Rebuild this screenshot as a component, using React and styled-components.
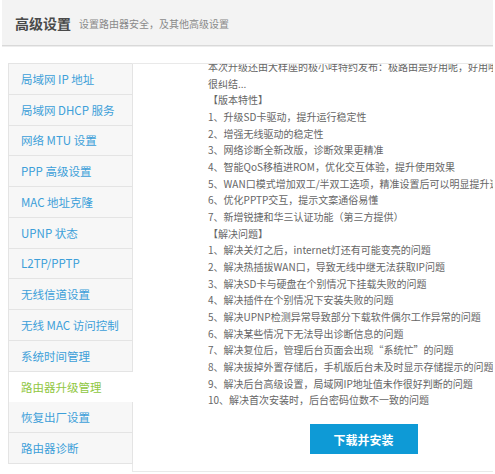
import React, { useLayoutEffect, useRef } from "react";
import styled, { createGlobalStyle } from "styled-components";

const Global = createGlobalStyle`
  html, body { margin: 0; padding: 0; background: #fff; }
  body { font-family: "Noto Sans CJK SC", "Noto Sans", sans-serif; overflow: hidden; }
  * { box-sizing: border-box; }
`;

const Page = styled.div`
  width: 491px;
  margin: 0 2px;
`;

const Header = styled.header`
  height: 46px;
  background: #f3f3f3;
  border-bottom: 1px solid #d9d9d9;
  box-shadow: 0 1px 0 #ededed;
  display: flex;
  align-items: center;
  padding-left: 13px;
  gap: 8px;
`;

const Title = styled.h1`
  margin: 0;
  font-size: 14px;
  font-weight: bold;
  color: #4a4a4a;
  line-height: 1;
`;

const Subtitle = styled.span`
  font-size: 10px;
  color: #8a8a8a;
  line-height: 1;
  padding-top: 2px;
`;

const Main = styled.div`
  display: flex;
  align-items: flex-start;
  margin-top: 17px;
  padding-left: 6px;
`;

const Sidebar = styled.nav`
  width: 125px;
  flex-shrink: 0;
  border-left: 1px solid #e4e4e4;
  border-top: 1px solid #e4e4e4;
`;

const NavItem = styled.div`
  position: relative;
  z-index: ${(p) => (p.$active ? 2 : 1)};
  height: 30.77px;
  display: flex;
  align-items: center;
  padding-left: 12px;
  font-size: 11.5px;
  white-space: nowrap;
  color: ${(p) => (p.$active ? "#8fc742" : "#3d9fd9")};
  background: ${(p) => (p.$active ? "#fff" : "#f7f7f7")};
  border-bottom: 1px solid ${(p) => (p.$active ? "#fff" : "#e4e4e4")};
  border-right: 1px solid ${(p) => (p.$active ? "#fff" : "#e4e4e4")};
`;

const Panel = styled.section`
  flex: 1;
  margin-left: -1px;
  height: 409px;
  border: 1px solid #e9e9e9;
  border-right: none;
  overflow: hidden;
  padding-left: 75px;
`;

const Notes = styled.div`
  width: 311px;
  display: flex;
  flex-direction: column;
  align-items: stretch;
  padding-bottom: 17px;
`;

const Line = styled.div`
  font-size: 10px;
  line-height: 16.67px;
  color: #666;
  white-space: nowrap;
`;

const Button = styled.button`
  align-self: center;
  flex-shrink: 0;
  margin-top: 15px;
  width: 108px;
  height: 30px;
  border: none;
  background: #0e9ad6;
  color: #fff;
  font-family: inherit;
  font-size: 12px;
  font-weight: bold;
  cursor: pointer;
`;

const navItems = [
  "局域网 IP 地址",
  "局域网 DHCP 服务",
  "网络 MTU 设置",
  "PPP 高级设置",
  "MAC 地址克隆",
  "UPNP 状态",
  "L2TP/PPTP",
  "无线信道设置",
  "无线 MAC 访问控制",
  "系统时间管理",
  "路由器升级管理",
  "恢复出厂设置",
  "路由器诊断",
];

const lines = [
  "本次升级还由大样座的极小咩特约发布：极路由是好用呢，好用哦，不好用呢",
  "很纠结...",
  "【版本特性】",
  "1、升级SD卡驱动，提升运行稳定性",
  "2、增强无线驱动的稳定性",
  "3、网络诊断全新改版，诊断效果更精准",
  "4、智能QoS移植进ROM，优化交互体验，提升使用效果",
  "5、WAN口模式增加双工/半双工选项，精准设置后可以明显提升速度",
  "6、优化PPTP交互，提示文案通俗易懂",
  "7、新增锐捷和华三认证功能（第三方提供）",
  "【解决问题】",
  "1、解决关灯之后，internet灯还有可能变亮的问题",
  "2、解决热插拔WAN口，导致无线中继无法获取IP问题",
  "3、解决SD卡与硬盘在个别情况下挂载失败的问题",
  "4、解决插件在个别情况下安装失败的问题",
  "5、解决UPNP检测异常导致部分下载软件偶尔工作异常的问题",
  "6、解决某些情况下无法导出诊断信息的问题",
  "7、解决复位后，管理后台页面会出现“系统忙”的问题",
  "8、解决拔掉外置存储后，手机版后台未及时显示存储提示的问题",
  "9、解决后台高级设置，局域网IP地址值未作很好判断的问题",
  "10、解决首次安装时，后台密码位数不一致的问题",
];

export default function App() {
  const panelRef = useRef(null);
  useLayoutEffect(() => {
    if (panelRef.current) panelRef.current.scrollTop = 5;
  }, []);

  return (
    <Page>
      <Global />
      <Header>
        <Title>高级设置</Title>
        <Subtitle>设置路由器安全，及其他高级设置</Subtitle>
      </Header>
      <Main>
        <Sidebar>
          {navItems.map((item) => (
            <NavItem key={item} $active={item === "路由器升级管理"}>
              {item}
            </NavItem>
          ))}
        </Sidebar>
        <Panel ref={panelRef}>
          <Notes>
            {lines.map((l, i) => (
              <Line key={i}>{l}</Line>
            ))}
            <Button>下载并安装</Button>
          </Notes>
        </Panel>
      </Main>
    </Page>
  );
}
